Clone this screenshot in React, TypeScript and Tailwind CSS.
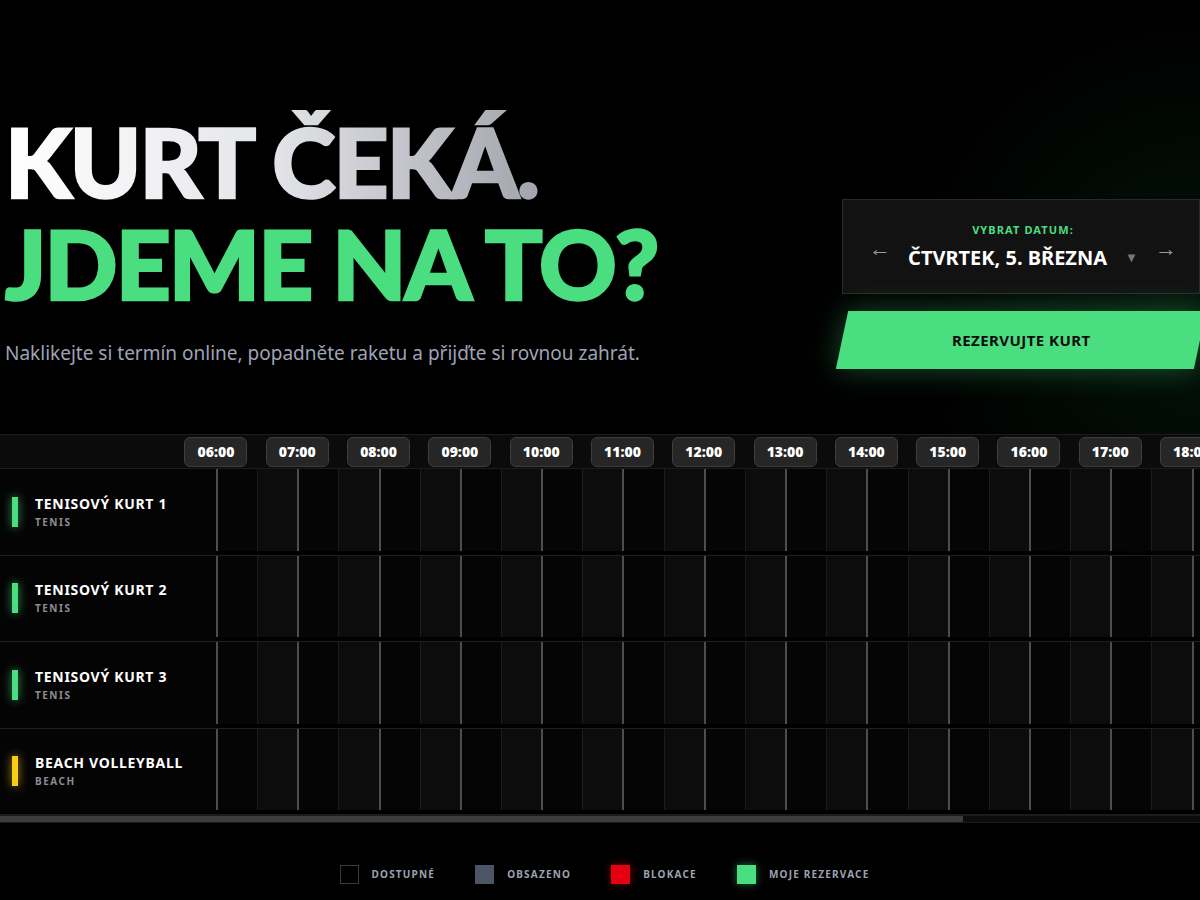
import React from 'react';

const hours = Array.from({ length: 16 }, (_, i) => `${String(i + 6).padStart(2, '0')}:00`);

const courts = [
  { id: 1, name: 'Tenisový kurt 1', type: 'Tenis', bar: 'bg-[#4ade80] shadow-[0_0_10px_rgba(74,222,128,0.7)]' },
  { id: 2, name: 'Tenisový kurt 2', type: 'Tenis', bar: 'bg-[#4ade80] shadow-[0_0_10px_rgba(74,222,128,0.7)]' },
  { id: 3, name: 'Tenisový kurt 3', type: 'Tenis', bar: 'bg-[#4ade80] shadow-[0_0_10px_rgba(74,222,128,0.7)]' },
  { id: 4, name: 'Beach volleyball', type: 'Beach', bar: 'bg-[#facc15] shadow-[0_0_10px_rgba(250,204,21,0.7)]' },
];

const legend = [
  { label: 'Dostupné', box: 'border border-[#3a3a3a] bg-black' },
  { label: 'Obsazeno', box: 'bg-[#4b5563]' },
  { label: 'Blokace', box: 'bg-[#e5000f] shadow-[0_0_8px_rgba(229,0,15,0.5)]' },
  { label: 'Moje rezervace', box: 'bg-[#4ade80] shadow-[0_0_8px_rgba(74,222,128,0.5)]' },
];

const DatePicker = () => (
  <div className="flex h-[95px] items-center justify-between border border-[#2a2a2a] bg-[#121212] pl-[26px] pr-[22px]">
    <button className="text-[22px] font-bold leading-none text-[#9a9a9a]">←</button>
    <div className="flex flex-col items-center">
      <span className="text-[11px] font-bold leading-[14px] tracking-[0.1em] text-[#4ade80]">VYBRAT DATUM:</span>
      <div className="mt-[8px] flex items-center gap-[18px]">
        <span className="text-[20px] font-bold leading-[26px] text-white">ČTVRTEK, 5. BŘEZNA</span>
        <span className="text-[13px] text-[#777]">▼</span>
      </div>
    </div>
    <button className="text-[22px] font-bold leading-none text-[#9a9a9a]">→</button>
  </div>
);

const App = () => {
  return (
    <div className="relative min-h-screen w-full overflow-hidden bg-black bg-[radial-gradient(circle_at_100%_34%,rgba(34,197,94,0.10),transparent_22%)] font-['Noto_Sans',sans-serif]">
      <section className="flex items-start justify-between pt-[110px]">
        <div className="pl-[5px]">
          <h1 className="font-['Lato','Noto_Sans',sans-serif] text-[96px] font-black leading-[102px] tracking-[-0.02em]">
            <span className="inline-block bg-linear-to-r from-white via-[#e4e5e9] to-[#a3a5ae] bg-clip-text text-transparent [-webkit-text-stroke:2.5px_transparent]">KURT ČEKÁ.</span>
            <br />
            <span className="text-[#4ade80] [-webkit-text-stroke:2.5px_#4ade80]">JDEME NA TO?</span>
          </h1>
          <p className="mt-[25px] text-[19px] leading-[28px] text-[#9ea3b5]">
            Naklikejte si termín online, popadněte raketu a přijďte si rovnou zahrát.
          </p>
        </div>
        <div className="mt-[89px] w-[358px] shrink-0">
          <DatePicker />
          <button className="mt-[17px] flex h-[58px] w-full -skew-x-12 items-center justify-center bg-[#4ade80] shadow-[0_0_30px_rgba(74,222,128,0.35)]">
            <span className="skew-x-12 text-[15px] font-bold tracking-[0.03em] text-[#0b0b0b]">REZERVUJTE KURT</span>
          </button>
        </div>
      </section>

      <section className="mt-[65px] overflow-hidden">
        <div className="flex h-[35px] items-center border-y border-[#1c1c1c] bg-[#0b0b0b]">
          <div className="w-[175.35px] shrink-0" />
          {hours.map((h) => (
            <div key={h} className="flex w-[81.3px] shrink-0 justify-center">
              <div className="flex h-[30px] w-[63px] items-center justify-center rounded-[6px] border border-[#3d3d3d] bg-[#262626] text-[14px] font-black text-white">
                {h}
              </div>
            </div>
          ))}
        </div>

        {courts.map((court) => (
          <div key={court.id} className="flex h-[86.5px] border-b border-[#1f1f1f]">
            <div className="flex w-[216px] shrink-0 items-center gap-[17px] bg-[#040404] pl-[12px]">
              <div className={`h-[30px] w-[6px] ${court.bar}`} />
              <div className="flex flex-col">
                <span className="text-[14px] font-bold uppercase leading-[18px] tracking-[0.05em] text-white">{court.name}</span>
                <span className="mt-[3px] text-[10px] font-bold uppercase leading-[13px] tracking-[0.15em] text-[#8b8d96]">{court.type}</span>
              </div>
            </div>
            <div className="flex pb-[4px]">
              {hours.map((h) => (
                <div key={h} className="flex w-[81.3px] shrink-0 border-l-2 border-[#4d4d4d]">
                  <div className="flex-1 bg-[#050505]" />
                  <div className="flex-1 border-l border-[#1c1c1c] bg-[#0c0c0c]" />
                </div>
              ))}
            </div>
          </div>
        ))}

        <div className="h-[8px] border-y border-[#1a1a1a] bg-[#0d0d0d]">
          <div className="h-full w-[963px] bg-[#3c3c3c]" />
        </div>
      </section>

      <div className="mt-[42px] flex justify-center gap-[40px] pl-[9px]">
        {legend.map((item) => (
          <div key={item.label} className="flex items-center gap-[13px]">
            <div className={`h-[19px] w-[19px] ${item.box}`} />
            <span className="text-[10px] font-bold uppercase tracking-[0.12em] text-[#9ca3af]">{item.label}</span>
          </div>
        ))}
      </div>
    </div>
  );
};

export default App;
